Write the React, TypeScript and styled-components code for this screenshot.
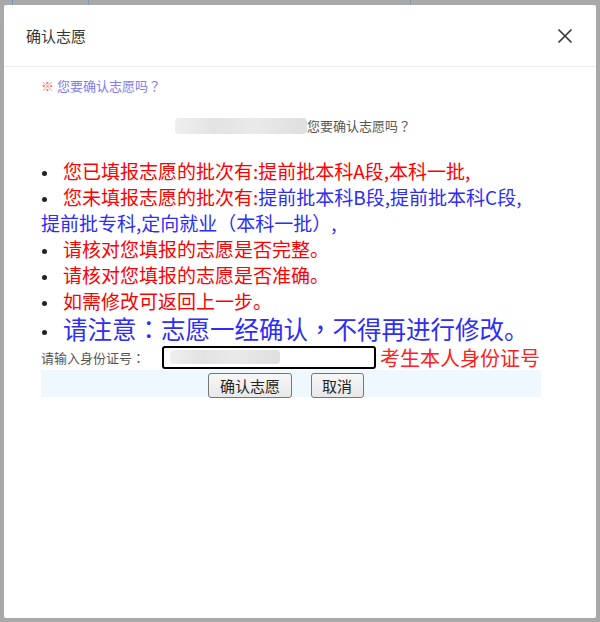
import React from "react";
import styled, { createGlobalStyle } from "styled-components";

const GlobalStyle = createGlobalStyle`
  html, body {
    margin: 0;
    padding: 0;
  }
  body {
    font-family: "Noto Sans CJK SC", "Liberation Sans", sans-serif;
    background: #a9a9a9;
    text-spacing-trim: space-all;
  }
`;

const Backdrop = styled.div`
  width: 600px;
  height: 622px;
  box-sizing: border-box;
  padding: 5px 4px 4px 4px;
  background-color: #a9a9a9;
  background-image: linear-gradient(#7f95b5, #7f95b5), linear-gradient(#7f95b5, #7f95b5),
    linear-gradient(#7f95b5, #7f95b5);
  background-size: 1px 5px, 1px 5px, 1px 5px;
  background-position: 12px 0, 88px 0, 410px 0;
  background-repeat: no-repeat;
`;

const Modal = styled.div`
  width: 592px;
  height: 613px;
  background: #fff;
  border-radius: 2px;
  display: flex;
  flex-direction: column;
`;

const Header = styled.div`
  height: 62px;
  box-sizing: border-box;
  border-bottom: 1px solid #eeeeee;
  display: flex;
  align-items: center;
  justify-content: space-between;
  padding: 0 22px 0 22px;
`;

const Title = styled.div`
  font-size: 15px;
  color: #333;
`;

const CloseButton = styled.button`
  border: none;
  background: none;
  padding: 0;
  width: 18px;
  height: 18px;
  display: flex;
  cursor: pointer;
`;

const Body = styled.div`
  padding: 9px 0 0 37px;
  width: 500px;
`;

const Notice = styled.div`
  font-size: 13px;
  color: #7d7bf4;
  line-height: 20px;
`;

const Mark = styled.span`
  color: #ff6a6a;
`;

/* centred full-width punctuation, as the original page's font draws it */
const P = styled.span`
  font-family: "Noto Sans CJK TC", "Noto Sans CJK SC", sans-serif;
`;

const Greeting = styled.div`
  margin-top: 20px;
  display: flex;
  justify-content: center;
  align-items: center;
  font-size: 13px;
  line-height: 20px;
  color: #555;
  padding-left: 4px;
`;

const Blur = styled.span<{ $w: number; $h: number }>`
  display: inline-block;
  width: ${(p) => p.$w}px;
  height: ${(p) => p.$h}px;
  border-radius: 4px;
  background: linear-gradient(90deg, #ececec 0%, #dedede 30%, #e6e6e6 60%, #d9d9d9 100%);
  opacity: 0.85;
`;

const List = styled.ul`
  list-style: none;
  margin: 22px 0 0 0;
  padding: 0 3px 0 0;
`;

const Item = styled.li<{ $big?: boolean }>`
  font-size: ${(p) => (p.$big ? "24.5px" : "19px")};
  line-height: ${(p) => (p.$big ? "30px" : "26px")};
  &::before {
    content: "";
    display: inline-block;
    width: 5px;
    height: 5px;
    border-radius: 50%;
    background: #222;
    margin: 0 16px 0 1px;
    vertical-align: middle;
  }
`;

const Red = styled.span`
  color: #ff0000;
`;

const Blue = styled.span`
  color: #2d2df5;
`;

const IdRow = styled.div`
  display: flex;
  align-items: center;
  height: 26px;
`;

const Label = styled.span`
  font-size: 13px;
  color: #555;
  width: 121px;
  flex-shrink: 0;
`;

const IdInput = styled.div`
  width: 204px;
  height: 19px;
  border: 2px solid #000;
  border-radius: 3px;
  display: flex;
  align-items: center;
  padding-left: 6px;
`;

const Hint = styled.span`
  font-size: 20px;
  color: #ff2020;
  margin-left: 4px;
`;

const Actions = styled.div`
  background: #f0f8ff;
  height: 27px;
  display: flex;
  justify-content: center;
  align-items: flex-end;
  gap: 19px;
  padding-right: 10px;
`;

const Button = styled.button`
  font-family: "Noto Sans CJK SC", sans-serif;
  font-size: 15px;
  color: #222;
  height: 25px;
  padding: 0 10.5px;
  margin-bottom: -1px;
  border: 1px solid #767676;
  border-radius: 3px;
  background: linear-gradient(#f7f7f7, #e8e8e8);
  line-height: 20px;
`;

export default function App() {
  return (
    <>
      <GlobalStyle />
      <Backdrop>
        <Modal>
          <Header>
            <Title>确认志愿</Title>
            <CloseButton aria-label="关闭">
              <svg width="18" height="18" viewBox="0 0 18 18">
                <path d="M2.5 2.5 L15.5 15.5 M15.5 2.5 L2.5 15.5" stroke="#333" strokeWidth="1.6" />
              </svg>
            </CloseButton>
          </Header>
          <Body>
            <Notice>
              <Mark>※</Mark> 您要确认志愿吗<P>？</P>
            </Notice>
            <Greeting>
              <Blur $w={132} $h={16} />
              您要确认志愿吗<P>？</P>
            </Greeting>
            <List>
              <Item>
                <Red>您已填报志愿的批次有:提前批本科A段,本科一批,</Red>
              </Item>
              <Item>
                <Red>您未填报志愿的批次有:</Red>
                <Blue>
                  提前批本科B段,提前批本科C段,提前批专科,定向就业<P>（</P>本科一批<P>）</P>,
                </Blue>
              </Item>
              <Item>
                <Red>请核对您填报的志愿是否完整。</Red>
              </Item>
              <Item>
                <Red>请核对您填报的志愿是否准确。</Red>
              </Item>
              <Item>
                <Red>如需修改可返回上一步。</Red>
              </Item>
              <Item $big>
                <Blue>
                  请注意<P>：</P>志愿一经确认<P>，</P>不得再进行修改。
                </Blue>
              </Item>
            </List>
            <IdRow>
              <Label>
                请输入身份证号<P>：</P>
              </Label>
              <IdInput>
                <Blur $w={110} $h={14} />
              </IdInput>
              <Hint>考生本人身份证号</Hint>
            </IdRow>
            <Actions>
              <Button>确认志愿</Button>
              <Button>取消</Button>
            </Actions>
          </Body>
        </Modal>
      </Backdrop>
    </>
  );
}
